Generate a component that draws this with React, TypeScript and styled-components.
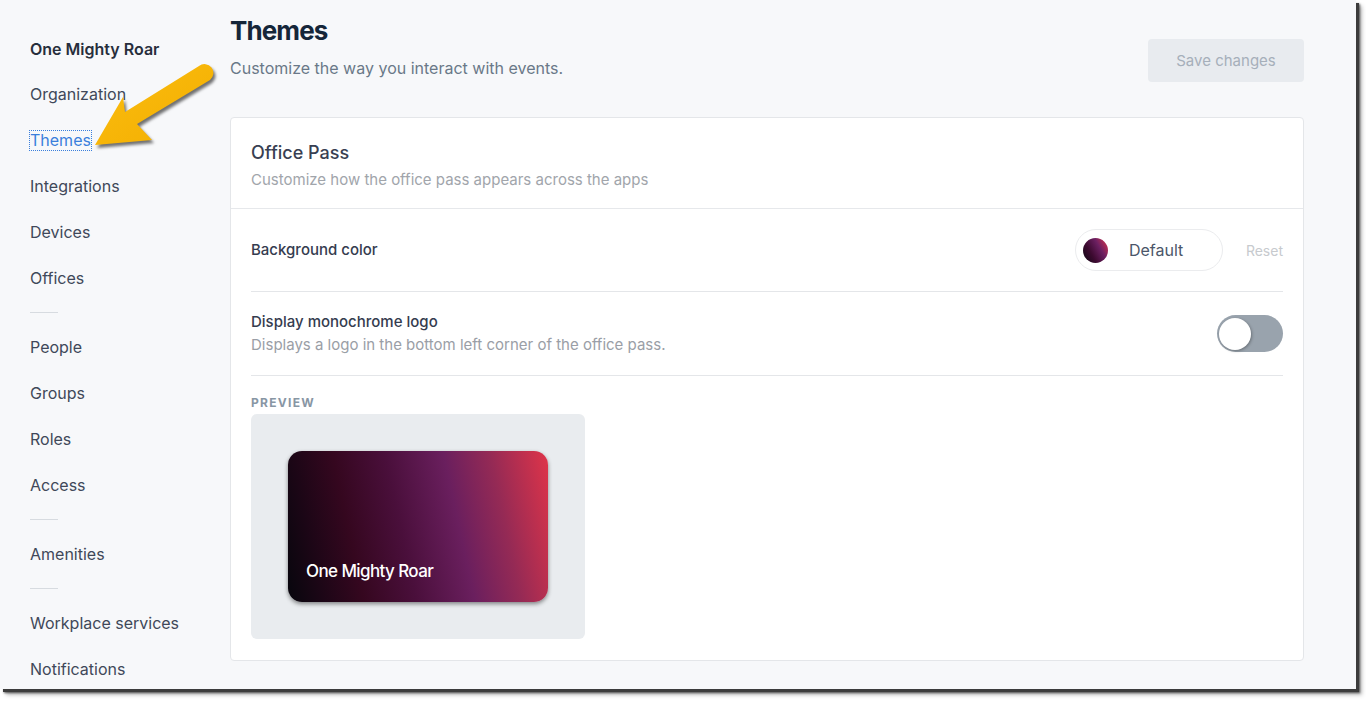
import React from "react";
import styled, { createGlobalStyle } from "styled-components";

const Global = createGlobalStyle`
  html, body { margin: 0; padding: 0; background: #ffffff; }
  body { font-family: Inter, "Noto Sans", sans-serif; -webkit-font-smoothing: antialiased; }
  * { box-sizing: border-box; }
`;

const Page = styled.div`
  width: 1366px;
  height: 701px;
  background: #ffffff;
`;

const Frame = styled.div`
  position: relative;
  width: 1356px;
  height: 689px;
  display: flex;
  background: #f7f8fa;
  overflow: hidden;
  box-shadow: 3px 3px 0 0 #3c3c3c, 4px 4px 2px 0 rgba(0, 0, 0, 0.6), 6px 6px 4px 0 rgba(0, 0, 0, 0.25);
`;

const Sidebar = styled.nav`
  width: 230px;
  flex: 0 0 230px;
  padding: 27px 0 0 30px;
  display: flex;
  flex-direction: column;
`;

const NavItem = styled.div<{ $strong?: boolean; $active?: boolean }>`
  flex-shrink: 0;
  height: ${(p) => (p.$strong ? 44 : 46)}px;
  display: flex;
  align-items: center;
  font-size: 16px;
  font-weight: ${(p) => (p.$strong ? 600 : 400)};
  color: ${(p) => (p.$active ? "#3a7fdc" : p.$strong ? "#272e3c" : "#404859")};
  white-space: nowrap;
`;

const ActiveLabel = styled.span`
  outline: 1px dotted #3a7fdc;
  outline-offset: 0px;
  line-height: 19px;
`;

const NavDivider = styled.div`
  flex-shrink: 0;
  height: 23px;
  display: flex;
  align-items: center;
  &::before {
    content: "";
    width: 28px;
    height: 1px;
    background: #d7dbe0;
  }
`;

const Main = styled.main`
  flex: 1;
  padding: 14px 52px 0 0;
  display: flex;
  flex-direction: column;
`;

const Header = styled.header`
  display: flex;
  justify-content: space-between;
  align-items: flex-start;
  height: 65px;
`;

const TitleBlock = styled.div`
  display: flex;
  flex-direction: column;
  gap: 9px;
`;

const Title = styled.h1`
  margin: 0;
  font-size: 26px;
  line-height: 34px;
  font-weight: 700;
  color: #152639;
  letter-spacing: -0.9px;
`;

const Subtitle = styled.p`
  margin: 0;
  font-size: 16px;
  line-height: 22px;
  color: #6a7888;
`;

const SaveButton = styled.button`
  margin-top: 25px;
  width: 156px;
  height: 43px;
  border: none;
  border-radius: 4px;
  background: #e8ebef;
  color: #a6afba;
  font-family: inherit;
  font-size: 15px;
`;

const Card = styled.section`
  margin-top: 38px;
  background: #ffffff;
  border: 1px solid #e4e6e9;
  border-radius: 4px;
  display: flex;
  flex-direction: column;
`;

const CardHeader = styled.div`
  padding: 23px 20px 18px;
  border-bottom: 1px solid #e6e8eb;
  display: flex;
  flex-direction: column;
  gap: 5px;
`;

const CardTitle = styled.h2`
  margin: 0;
  font-size: 18px;
  line-height: 24px;
  font-weight: 500;
  color: #383f52;
`;

const CardSub = styled.p`
  margin: 0;
  font-size: 15px;
  line-height: 20px;
  color: #a1a5ab;
`;

const CardBody = styled.div`
  padding: 0 20px 21px;
  display: flex;
  flex-direction: column;
`;

const Row = styled.div`
  padding: 20px 0;
  border-bottom: 1px solid #e4e6e9;
  display: flex;
  align-items: center;
  justify-content: space-between;
`;

const RowText = styled.div`
  display: flex;
  flex-direction: column;
  gap: 3px;
`;

const RowLabel = styled.div`
  font-size: 15px;
  line-height: 20px;
  font-weight: 500;
  color: #353c4f;
`;

const RowHint = styled.div`
  font-size: 15px;
  line-height: 20px;
  color: #9a9ea6;
`;

const Controls = styled.div`
  display: flex;
  align-items: center;
  gap: 23px;
`;

const Pill = styled.div`
  width: 148px;
  height: 42px;
  border: 1px solid #ebecee;
  border-radius: 21px;
  display: flex;
  align-items: center;
  gap: 21px;
  padding: 0 0 0 7px;
  font-size: 16px;
  color: #4b5669;
`;

const Swatch = styled.span`
  width: 25px;
  height: 25px;
  border-radius: 50%;
  background: linear-gradient(60deg, #0c0612 0%, #3d0a30 35%, #6c2062 65%, #e1344a 100%);
`;

const ResetLink = styled.span`
  font-size: 14px;
  color: #c7cace;
`;

const Toggle = styled.div`
  position: relative;
  width: 66px;
  height: 37px;
  border-radius: 19px;
  background: #99a3ad;
`;

const Knob = styled.span`
  position: absolute;
  left: 2px;
  top: 2.5px;
  width: 32px;
  height: 32px;
  border-radius: 50%;
  background: #ffffff;
  box-shadow: 1px 1px 3px rgba(0, 0, 0, 0.3);
`;

const SectionLabel = styled.div`
  margin-top: 19px;
  font-size: 12px;
  line-height: 16px;
  font-weight: 700;
  letter-spacing: 1.3px;
  color: #8896a4;
`;

const PreviewBox = styled.div`
  margin-top: 3px;
  width: 334px;
  height: 225px;
  border-radius: 6px;
  background: #e9ecef;
  display: flex;
  align-items: center;
  justify-content: center;
`;

const PassCard = styled.div`
  width: 260px;
  height: 151px;
  border-radius: 14px;
  background: linear-gradient(78deg, #07060d 0%, #1c0616 12%, #35071f 26%, #4a0f3b 44%, #6a1f5e 64%, #952a55 80%, #df3449 100%);
  box-shadow: 0 2px 4px rgba(0, 0, 0, 0.45);
  display: flex;
  align-items: flex-end;
  padding: 0 0 20px 18px;
`;

const PassName = styled.span`
  font-size: 17px;
  line-height: 22px;
  font-weight: 500;
  color: #ffffff;
  letter-spacing: -0.6px;
`;

const ArrowOverlay = styled.svg`
  position: absolute;
  left: 0;
  top: 0;
  width: 240px;
  height: 180px;
  filter: drop-shadow(2px 3px 1.5px rgba(0, 0, 0, 0.55));
  pointer-events: none;
`;

const navGroups: (string | null)[] = [
  "Organization",
  "Themes",
  "Integrations",
  "Devices",
  "Offices",
  null,
  "People",
  "Groups",
  "Roles",
  "Access",
  null,
  "Amenities",
  null,
  "Workplace services",
  "Notifications",
];

export default function App() {
  return (
    <Page>
      <Global />
      <Frame>
        <Sidebar>
          <NavItem $strong>One Mighty Roar</NavItem>
          {navGroups.map((item, i) =>
            item === null ? (
              <NavDivider key={i} />
            ) : item === "Themes" ? (
              <NavItem key={i} $active>
                <ActiveLabel>{item}</ActiveLabel>
              </NavItem>
            ) : (
              <NavItem key={i}>{item}</NavItem>
            )
          )}
        </Sidebar>
        <Main>
          <Header>
            <TitleBlock>
              <Title>Themes</Title>
              <Subtitle>Customize the way you interact with events.</Subtitle>
            </TitleBlock>
            <SaveButton>Save changes</SaveButton>
          </Header>
          <Card>
            <CardHeader>
              <CardTitle>Office Pass</CardTitle>
              <CardSub>Customize how the office pass appears across the apps</CardSub>
            </CardHeader>
            <CardBody>
              <Row>
                <RowLabel>Background color</RowLabel>
                <Controls>
                  <Pill>
                    <Swatch />
                    <span>Default</span>
                  </Pill>
                  <ResetLink>Reset</ResetLink>
                </Controls>
              </Row>
              <Row>
                <RowText>
                  <RowLabel>Display monochrome logo</RowLabel>
                  <RowHint>Displays a logo in the bottom left corner of the office pass.</RowHint>
                </RowText>
                <Toggle>
                  <Knob />
                </Toggle>
              </Row>
              <SectionLabel>PREVIEW</SectionLabel>
              <PreviewBox>
                <PassCard>
                  <PassName>One Mighty Roar</PassName>
                </PassCard>
              </PreviewBox>
            </CardBody>
          </Card>
        </Main>
        <ArrowOverlay viewBox="0 0 240 180">
          <defs>
            <linearGradient id="arrowFill" x1="0" y1="0" x2="1" y2="1">
              <stop offset="0" stopColor="#fbbd10" />
              <stop offset="1" stopColor="#f3ae00" />
            </linearGradient>
          </defs>
          <path
            d="M95 145 L123 97 L125 112 L199 66 A8.5 8.5 0 0 1 210 80 L137 124 L152 140 Z"
            fill="url(#arrowFill)"
            strokeLinejoin="round"
          />
        </ArrowOverlay>
      </Frame>
    </Page>
  );
}
